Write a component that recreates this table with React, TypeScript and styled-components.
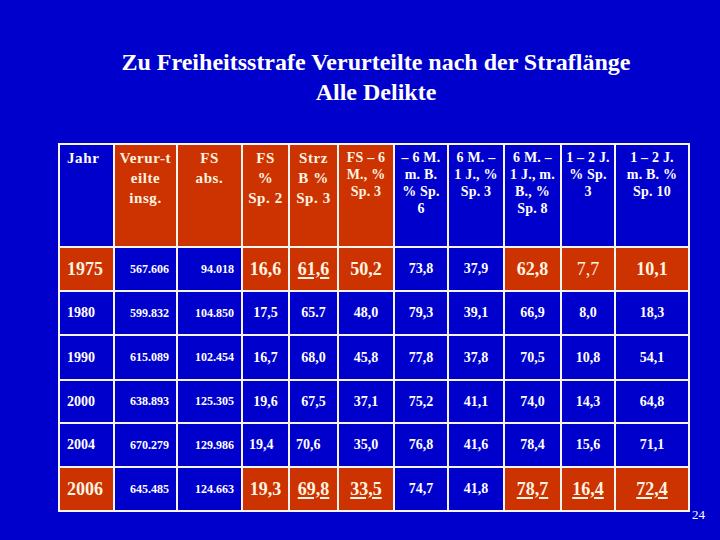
import React from "react";
import styled, { createGlobalStyle } from "styled-components";

const BLUE = "#0000cc";
const RED = "#cc3300";
const CREAM = "#fff4e2";

const Global = createGlobalStyle`
  html, body { margin: 0; padding: 0; background: ${BLUE}; }
  body { font-family: "Liberation Serif", "Times New Roman", serif; }
`;

const Slide = styled.div`
  width: 720px;
  height: 540px;
  background: ${BLUE};
  display: flex;
  flex-direction: column;
  overflow: hidden;
`;

const Title = styled.h1`
  margin: 47px 0 0 0;
  padding-left: 32px;
  font-size: 24px;
  line-height: 30px;
  font-weight: bold;
  color: #ffffff;
  text-align: center;
`;

const Body = styled.div`
  margin-top: 36px;
  margin-left: 58px;
  display: flex;
  align-items: flex-end;
`;

const Grid = styled.div`
  display: grid;
  grid-template-columns: 53px 61px 63px 45px 47px 54px 52px 54px 55px 52px 72px;
  grid-template-rows: 101px 42px 42px 43px 41px 42px 42px;
  gap: 2px;
  padding: 2px;
  background: #f8f4f0;
`;

const PageNum = styled.div`
  margin-left: 2px;
  margin-bottom: -10px;
  font-size: 13px;
  line-height: 15px;
  color: #ffffff;
`;

type Tone = "red" | "blue";

const HeadCell = styled.div<{ $tone: Tone; $align?: "left" | "center"; $small?: boolean }>`
  background: ${(p) => (p.$tone === "red" ? RED : BLUE)};
  color: ${(p) => (p.$tone === "red" ? CREAM : "#ffffff")};
  font-weight: bold;
  font-size: ${(p) => (p.$small ? "14px" : "15px")};
  line-height: ${(p) => (p.$small ? "17px" : "20px")};
  letter-spacing: ${(p) => (p.$small ? "0.2px" : "0.6px")};
  text-align: ${(p) => p.$align ?? "center"};
  padding: ${(p) => (p.$small ? "4px 0 0" : "3px 0 0")};
  padding-left: ${(p) => (p.$align === "left" ? "7px" : "0")};
  white-space: nowrap;
`;

const Cell = styled.div<{
  $tone: Tone;
  $justify: "flex-start" | "center" | "flex-end";
  $size: number;
  $regular?: boolean;
  $underline?: boolean;
  $pad?: string;
}>`
  background: ${(p) => (p.$tone === "red" ? RED : BLUE)};
  color: ${(p) => (p.$tone === "red" ? CREAM : "#ffffff")};
  display: flex;
  align-items: center;
  justify-content: ${(p) => p.$justify};
  padding: ${(p) => p.$pad ?? "0"};
  font-size: ${(p) => p.$size}px;
  font-weight: ${(p) => (p.$regular ? "normal" : "bold")};
  text-decoration: ${(p) => (p.$underline ? "underline" : "none")};
  text-decoration-thickness: 2px;
  text-underline-offset: 2px;
  white-space: nowrap;
`;

type HeadDef = { lines: string[]; tone: Tone; align?: "left" | "center"; small?: boolean };

const headers: HeadDef[] = [
  { lines: ["Jahr"], tone: "blue", align: "left" },
  { lines: ["Verur-t", "eilte", "insg."], tone: "red" },
  { lines: ["FS", "abs."], tone: "red" },
  { lines: ["FS", "%", "Sp. 2"], tone: "red" },
  { lines: ["Strz", "B %", "Sp. 3"], tone: "red" },
  { lines: ["FS – 6", "M., %", "Sp. 3"], tone: "red", small: true },
  { lines: ["– 6 M.", "m. B.", "% Sp.", "6"], tone: "blue", small: true },
  { lines: ["6 M. –", "1 J., %", "Sp. 3"], tone: "blue", small: true },
  { lines: ["6 M. –", "1 J., m.", "B., %", "Sp. 8"], tone: "blue", small: true },
  { lines: ["1 – 2 J.", "% Sp.", "3"], tone: "blue", small: true },
  { lines: ["1 – 2 J.", "m. B. %", "Sp. 10"], tone: "blue", small: true },
];

type RowDef = {
  year: string;
  highlight: boolean;
  values: string[];
  underline?: number[];
  regular?: number[];
  leftAlign?: number[];
};

const rows: RowDef[] = [
  {
    year: "1975",
    highlight: true,
    values: ["567.606", "94.018", "16,6", "61,6", "50,2", "73,8", "37,9", "62,8", "7,7", "10,1"],
    underline: [3],
    regular: [8],
  },
  {
    year: "1980",
    highlight: false,
    values: ["599.832", "104.850", "17,5", "65.7", "48,0", "79,3", "39,1", "66,9", "8,0", "18,3"],
  },
  {
    year: "1990",
    highlight: false,
    values: ["615.089", "102.454", "16,7", "68,0", "45,8", "77,8", "37,8", "70,5", "10,8", "54,1"],
  },
  {
    year: "2000",
    highlight: false,
    values: ["638.893", "125.305", "19,6", "67,5", "37,1", "75,2", "41,1", "74,0", "14,3", "64,8"],
  },
  {
    year: "2004",
    highlight: false,
    values: ["670.279", "129.986", "19,4", "70,6", "35,0", "76,8", "41,6", "78,4", "15,6", "71,1"],
    leftAlign: [2, 3],
  },
  {
    year: "2006",
    highlight: true,
    values: ["645.485", "124.663", "19,3", "69,8", "33,5", "74,7", "41,8", "78,7", "16,4", "72,4"],
    underline: [3, 4, 7, 8, 9],
  },
];

// value indices (0-based among values) that are red in highlighted rows
const redCols = [2, 3, 4, 7, 8, 9];

export default function App() {
  return (
    <Slide>
      <Global />
      <Title>
        Zu Freiheitsstrafe Verurteilte nach der Straflänge
        <br />
        Alle Delikte
      </Title>
      <Body>
        <Grid>
          {headers.map((h, i) => (
            <HeadCell key={`h${i}`} $tone={h.tone} $align={h.align} $small={h.small}>
              {h.lines.map((l, j) => (
                <div key={j}>{l}</div>
              ))}
            </HeadCell>
          ))}
          {rows.map((r) => (
            <React.Fragment key={r.year}>
              <Cell
                $tone={r.highlight ? "red" : "blue"}
                $justify="flex-start"
                $size={r.highlight ? 18 : 14}
                $pad="0 0 0 7px"
              >
                {r.year}
              </Cell>
              {r.values.map((v, i) => {
                const red = r.highlight && redCols.includes(i);
                const abs = i < 2;
                const left = r.leftAlign?.includes(i);
                return (
                  <Cell
                    key={i}
                    $tone={red ? "red" : "blue"}
                    $justify={abs ? "flex-end" : left ? "flex-start" : "center"}
                    $pad={abs ? "0 7px 0 0" : left ? "0 0 0 6px" : "0"}
                    $size={abs ? 12 : red ? 18 : 14}
                    $regular={r.regular?.includes(i)}
                    $underline={r.underline?.includes(i)}
                  >
                    {v}
                  </Cell>
                );
              })}
            </React.Fragment>
          ))}
        </Grid>
        <PageNum>24</PageNum>
      </Body>
    </Slide>
  );
}
